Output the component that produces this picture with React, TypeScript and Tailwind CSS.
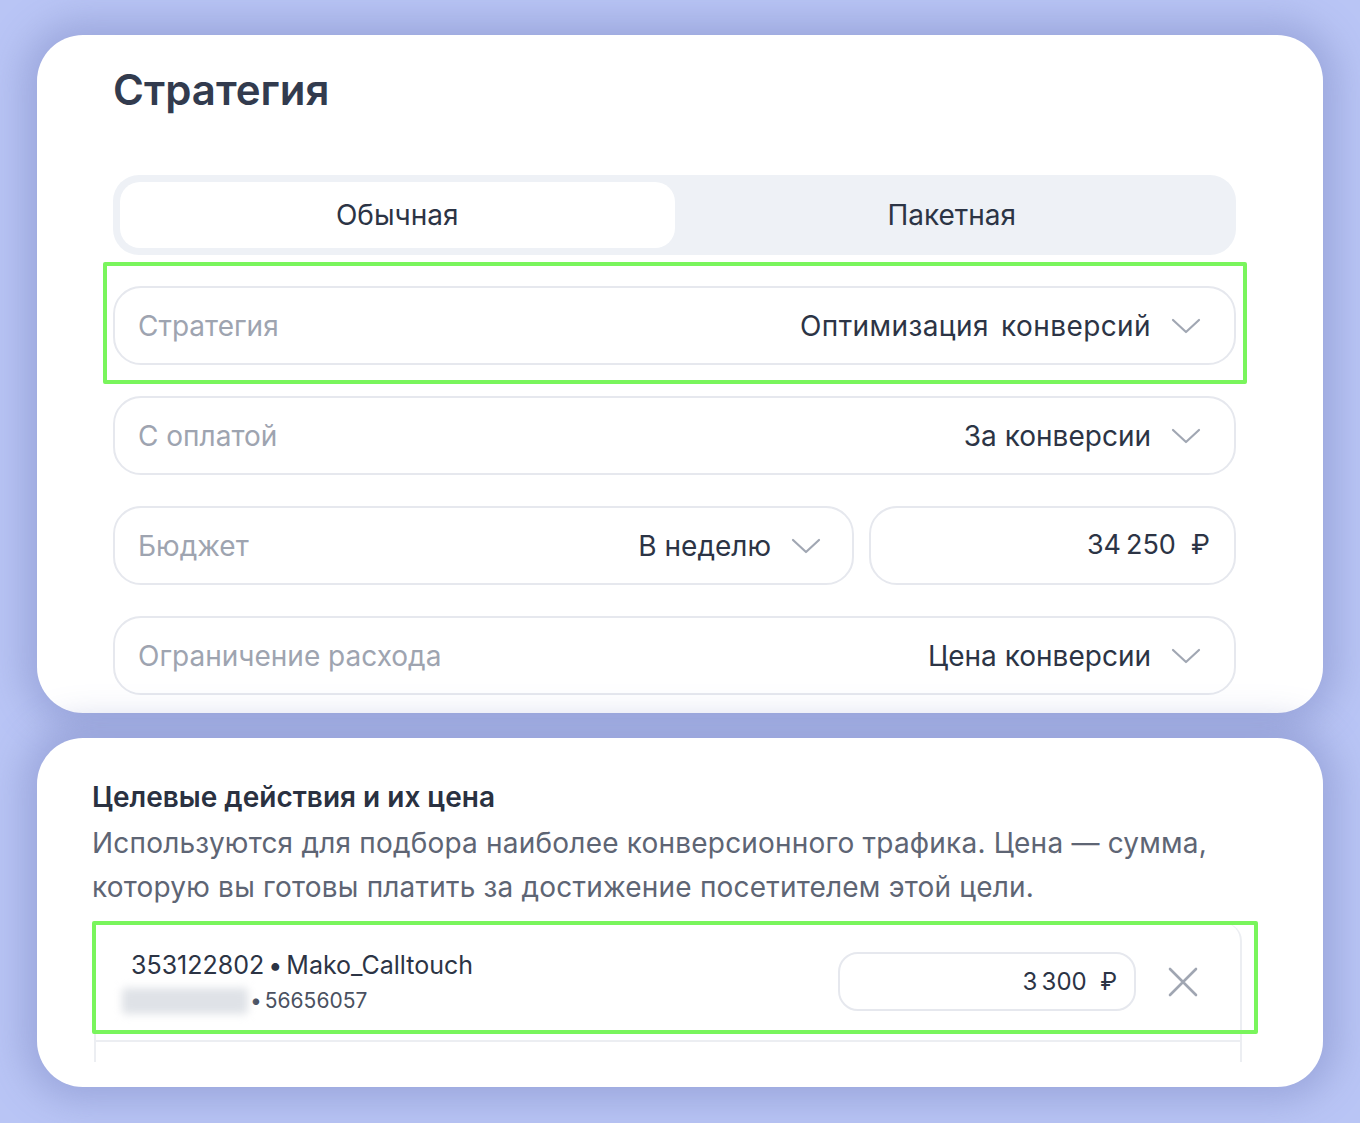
const font = { fontFamily: "Inter, 'Noto Sans', sans-serif" };

function Chevron() {
  return (
    <svg width="30" height="16" viewBox="0 0 30 16" fill="none" className="shrink-0">
      <path d="M2 2L15 14L28 2" stroke="#a1a7b3" strokeWidth="2.2" strokeLinecap="round" strokeLinejoin="round" />
    </svg>
  );
}

function SelectField({ label, value, className = "", valueClass = "" }: { label: string; value: string; className?: string; valueClass?: string }) {
  return (
    <div
      className={
        "h-[79px] rounded-[28px] border-2 border-[#e6e8ee] bg-white flex items-center justify-between pl-[23px] pr-[33px] " +
        className
      }
    >
      <span className="text-[28px] text-[#9ea4b0]">{label}</span>
      <div className="flex items-center gap-[20px]">
        <span className={"text-[28px] text-[#2c3445] " + valueClass}>{value}</span>
        <Chevron />
      </div>
    </div>
  );
}

export default function App() {
  return (
    <div className="w-[1360px] h-[1123px] bg-[#b9c5f5] pt-[35px] overflow-hidden" style={font}>
      {/* card 1 */}
      <div className="ml-[37px] w-[1286px] h-[678px] bg-white rounded-[46px] overflow-hidden shadow-[0_0_36px_14px_rgba(120,130,190,0.45)] pl-[76px] pr-[87px] pt-[27px]">
        <h1 className="text-[42px] leading-[56px] font-semibold text-[#323b4e]">Стратегия</h1>

        <div className="mt-[57px] h-[80px] rounded-[26px] bg-[#eef1f6] p-[7px] grid grid-cols-2">
          <div className="rounded-[20px] bg-white flex items-center justify-center text-[28px] text-[#2c3445]">Обычная</div>
          <div className="flex items-center justify-center text-[28px] text-[#2c3445]">Пакетная</div>
        </div>

        <div className="mt-[7px] -ml-[10px] -mr-[11px] border-4 border-[#79f55c] rounded-[2px] pl-[6px] pr-[7px] pt-[20px] pb-[15px]">
          <SelectField label="Стратегия" value="Оптимизация конверсий" valueClass="tracking-[0.4px] [word-spacing:4px]" />
        </div>

        <SelectField label="С оплатой" value="За конверсии" className="mt-[12px]" />

        <div className="mt-[31px] flex gap-[15px]">
          <div className="w-[741px] h-[79px] rounded-[28px] border-2 border-[#e6e8ee] flex items-center justify-between pl-[23px] pr-[31px]">
            <span className="text-[28px] text-[#9ea4b0]">Бюджет</span>
            <div className="flex items-center gap-[20px]">
              <span className="text-[28px] text-[#2c3445]">В неделю</span>
              <Chevron />
            </div>
          </div>
          <div className="flex-1 h-[79px] rounded-[28px] border-2 border-[#e6e8ee] flex items-center justify-end pr-[24px] text-[27px] text-[#2c3445]">
            34&thinsp;250&nbsp;&nbsp;₽
          </div>
        </div>

        <SelectField label="Ограничение расхода" value="Цена конверсии" className="mt-[31px]" />
      </div>

      {/* card 2 */}
      <div className="mt-[25px] ml-[37px] w-[1286px] h-[349px] bg-white rounded-[46px] overflow-hidden shadow-[0_0_36px_14px_rgba(120,130,190,0.45)] pl-[55px] pt-[41px]">
        <h2 className="text-[28px] leading-[36px] font-semibold text-[#2a3141]">Целевые действия и их цена</h2>
        <p className="mt-[6px] text-[28px] leading-[44px] tracking-[0.2px] text-[#5e6574]">
          Используются для подбора наиболее конверсионного трафика. Цена — сумма,
          <br />
          которую вы готовы платить за достижение посетителем этой цели.
        </p>

        <div className="relative mt-[14px] ml-[2px] w-[1148px]">
          <div className="border-l-2 border-r-2 border-[#eceef2] rounded-tr-[18px]">
            <div className="h-[119px] border-b-2 border-[#eceef2] flex items-center justify-between pl-[35px] pr-[42px]">
              <div className="flex flex-col">
                <span className="text-[25px] leading-[34px] text-[#2c3445]">
                  353122802<span className="mx-[4px]">•</span>Mako_Calltouch
                </span>
                <div className="mt-[4px] flex items-center">
                  <span className="-ml-[9px] w-[126px] h-[26px] rounded bg-[#dfe2e7] blur-[4px]" />
                  <span className="ml-[2px] text-[21px] leading-[30px] text-[#4a5161]">
                    •<span className="ml-[3px]">56656057</span>
                  </span>
                </div>
              </div>
              <div className="flex items-center gap-[32px]">
                <div className="w-[298px] h-[59px] rounded-[20px] border-2 border-[#e6e8ee] flex items-center justify-end pr-[17px] text-[24px] text-[#2c3445]">
                  3&thinsp;300&nbsp;&nbsp;₽
                </div>
                <svg width="30" height="30" viewBox="0 0 30 30" fill="none">
                  <path d="M2 2L28 28M28 2L2 28" stroke="#a0a6b2" strokeWidth="2.6" strokeLinecap="round" />
                </svg>
              </div>
            </div>
            <div className="h-[20px]" />
          </div>
          <div className="absolute -left-[2px] -top-[2px] w-[1166px] h-[113px] border-4 border-[#79f55c] rounded-[2px]" />
        </div>
      </div>
    </div>
  );
}
